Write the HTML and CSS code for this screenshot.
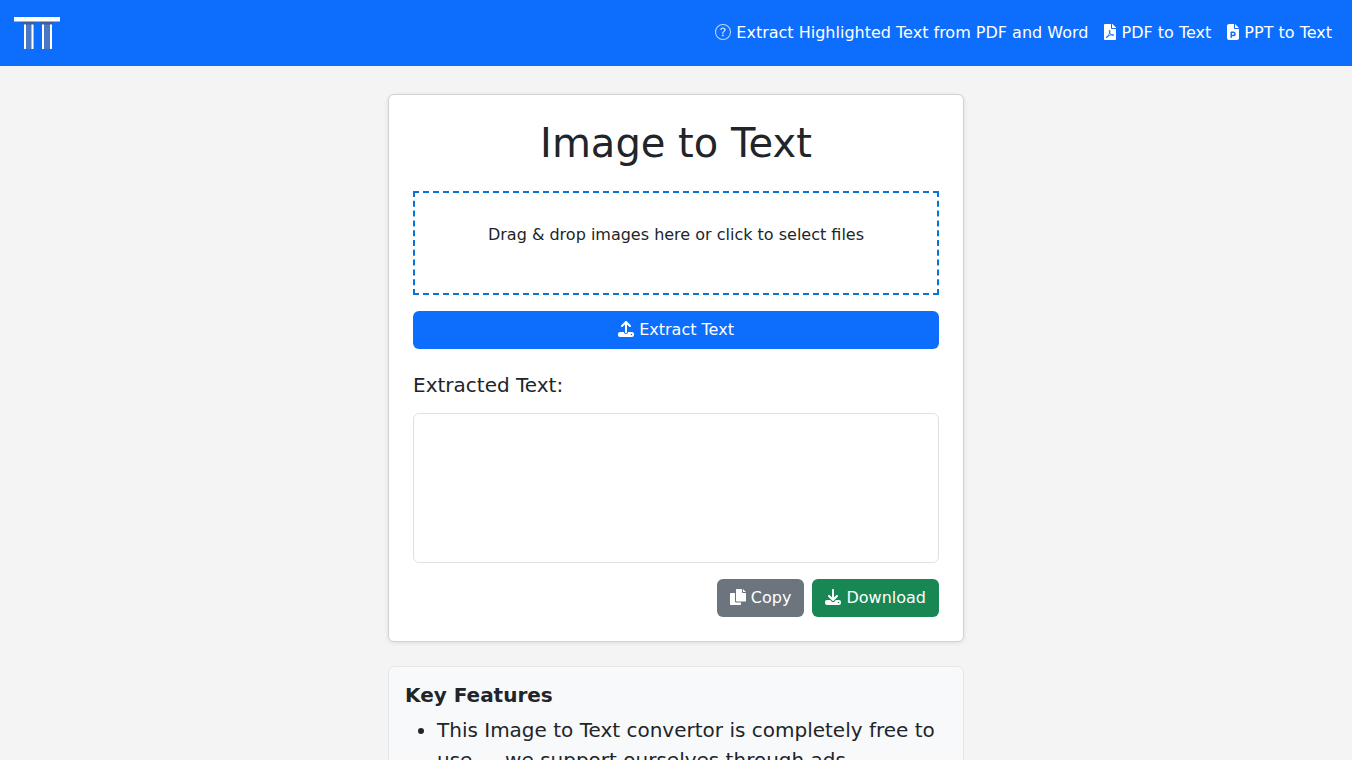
FILE: index.html
```html
<!DOCTYPE html>
<html lang="en">
<head>
<meta charset="utf-8">
<title>Image to Text</title>
<link rel="stylesheet" href="styles.css">
</head>
<body>
<nav class="navbar">
  <a class="brand" href="#" aria-label="Home">
    <svg width="46" height="32" viewBox="0 0 46 32">
      <path class="logo-stem" d="M10 7h9.500v25H10zM28 7h10v25H28z"/>
      <path class="logo-dim" d="M7 4h15v3.500H7zM25.500 4h14v3.500h-14z"/>
      <rect class="logo-white" x="0" y="0" width="46" height="4.500"/>
      <path class="logo-white" d="M10 7.500h2V32h-2zM17.500 7.500h2V32h-2zM28 7.500h2V32h-2zM36 7.500h2V32h-2z"/>
    </svg>
  </a>
  <div class="links">
    <a href="#"><svg class="ic thin" width="16" height="16" viewBox="0 0 16 16"><path d="M8 15A7 7 0 1 1 8 1a7 7 0 0 1 0 14m0 1A8 8 0 1 0 8 0a8 8 0 0 0 0 16"/><path d="M5.255 5.786a.237.237 0 0 0 .241.247h.825c.138 0 .248-.113.266-.25.09-.656.54-1.134 1.342-1.134.686 0 1.314.343 1.314 1.168 0 .635-.374.927-.965 1.371-.673.489-1.206 1.06-1.168 1.987l.003.217a.25.25 0 0 0 .25.246h.811a.25.25 0 0 0 .25-.25v-.105c0-.718.273-.927 1.01-1.486.609-.463 1.244-.977 1.244-2.056 0-1.511-1.276-2.241-2.673-2.241-1.267 0-2.655.59-2.75 2.286m1.557 5.763c0 .533.425.927 1.01.927.609 0 1.028-.394 1.028-.927 0-.552-.42-.94-1.029-.94-.584 0-1.009.388-1.009.94"/></svg> Extract Highlighted Text from PDF and Word</a>
    <a href="#"><svg class="ic" width="12" height="16" viewBox="0 0 384 512"><path d="M181.9 256.1c-5-16-4.9-46.9-2-46.9 8.4 0 7.6 36.9 2 46.9zm-1.7 47.2c-7.7 20.2-17.3 43.3-28.4 62.7 18.3-7 39-17.2 62.9-21.9-12.7-9.6-24.9-23.4-34.5-40.8zM86.1 428.1c0 .8 13.2-5.4 34.9-40.2-6.7 6.3-29.1 24.5-34.9 40.2zM248 160h136v328c0 13.3-10.7 24-24 24H24c-13.3 0-24-10.7-24-24V24C0 10.7 10.7 0 24 0h200v136c0 13.2 10.8 24 24 24zm-8 171.8c-20-12.2-33.3-29-42.7-53.8 4.5-18.5 11.6-46.6 6.2-64.2-4.7-29.4-42.4-26.5-47.8-6.8-5 18.3-.4 44.1 8.1 77-11.6 27.6-28.7 64.6-40.8 85.8-.1 0-.1.1-.2.1-27.1 13.9-73.6 44.5-54.5 68 5.6 6.9 16 10 21.5 10 17.9 0 35.7-18 61.1-61.8 25.8-8.5 54.1-19.1 79-23.2 21.7 11.8 47.1 19.5 64 19.5 29.2 0 31.2-32 19.7-43.4-13.9-13.6-54.3-9.7-73.6-7.2zM377 105L279 7c-4.5-4.5-10.6-7-17-7h-6v128h128v-6.1c0-6.3-2.5-12.4-7-16.9zm-74.1 255.3c4.1-2.7-2.5-11.9-42.8-9 37.1 15.8 42.8 9 42.8 9z"/></svg> PDF to Text</a>
    <a href="#"><svg class="ic" width="12" height="16" viewBox="0 0 384 512"><path d="M64 0C28.7 0 0 28.7 0 64V448c0 35.3 28.7 64 64 64H320c35.3 0 64-28.7 64-64V160H256c-17.7 0-32-14.3-32-32V0H64zM256 0V128H384L256 0zM136 240h68c42 0 76 34 76 76s-34 76-76 76H160v32c0 13.3-10.7 24-24 24s-24-10.7-24-24V368 264c0-13.3 10.7-24 24-24zm68 104c15.5 0 28-12.5 28-28s-12.5-28-28-28H160v56h44z"/></svg> PPT to Text</a>
  </div>
</nav>
<main class="container">
  <section class="card">
    <h1 class="title">Image to Text</h1>
    <div class="drop"><p>Drag &amp; drop images here or click to select files</p></div>
    <button class="btn btn-primary wide"><svg class="ic" width="16" height="16" viewBox="0 0 512 512"><path d="M288 109.3V352c0 17.7-14.3 32-32 32s-32-14.3-32-32V109.3l-73.4 73.4c-12.5 12.5-32.8 12.5-45.3 0s-12.5-32.8 0-45.3l128-128c12.5-12.5 32.8-12.5 45.3 0l128 128c12.5 12.5 12.5 32.8 0 45.3s-32.8 12.5-45.3 0L288 109.3zM64 352H192c0 35.3 28.7 64 64 64s64-28.7 64-64H448c35.3 0 64 28.7 64 64v32c0 35.3-28.7 64-64 64H64c-35.3 0-64-28.7-64-64V416c0-35.3 28.7-64 64-64zM432 456a24 24 0 1 0 0-48 24 24 0 1 0 0 48z"/></svg> Extract Text</button>
    <h2 class="sub">Extracted Text:</h2>
    <textarea class="output"></textarea>
    <div class="actions">
      <button class="btn btn-gray"><svg class="ic" width="16" height="16" viewBox="0 0 16 16"><path d="M7 0h5v3.200c0 .5.3.8.8.8H16v7.500c0 .6-.4 1-1 1H7c-.6 0-1-.4-1-1V1c0-.6.4-1 1-1zM13 0l3 3h-3zM1 4h4v8c0 1 .6 1.600 1.600 1.600H11V15c0 .6-.4 1-1 1H1c-.6 0-1-.4-1-1V5c0-.6.4-1 1-1z"/></svg> Copy</button>
      <button class="btn btn-green"><svg class="ic" width="16" height="16" viewBox="0 0 512 512"><path d="M288 32c0-17.700-14.300-32-32-32s-32 14.300-32 32V274.700l-73.400-73.400c-12.500-12.500-32.800-12.500-45.300 0s-12.500 32.800 0 45.300l128 128c12.500 12.500 32.800 12.500 45.300 0l128-128c12.500-12.500 12.500-32.800 0-45.300s-32.800-12.500-45.300 0L288 274.700V32zM64 352c-35.300 0-64 28.700-64 64v32c0 35.300 28.700 64 64 64H448c35.300 0 64-28.700 64-64V416c0-35.300-28.700-64-64-64H346.500l-45.300 45.300c-25 25-65.500 25-90.500 0L165.500 352H64zm368 56a24 24 0 1 1 0 48 24 24 0 1 1 0-48z"/></svg> Download</button>
    </div>
  </section>
  <section class="features">
    <h3>Key Features</h3>
    <ul>
      <li>This Image to Text convertor is completely free to use — we support ourselves through ads.</li>
    </ul>
  </section>
</main>
</body>
</html>
```
FILE: styles.css
```css
* { box-sizing: border-box; }
html, body { margin: 0; height: 100%; overflow: hidden; }
body { background: #f4f4f4; color: #212529; font-family: "DejaVu Sans", sans-serif; font-size: 16px; line-height: 1.5; }
a { color: #fff; text-decoration: none; }
.ic { vertical-align: -2px; fill: #fff; }
.thin { opacity: .75; }
.logo-white { fill: #fff; }
.logo-dim { fill: #3d5f96; }
.logo-stem { fill: #4a78c2; }
.navbar { height: 66px; background: #0d6efd; display: flex; align-items: center; justify-content: space-between; padding: 0 12px 0 14px; }
.brand { display: flex; }
.links { display: flex; }
.links a { padding: 8px; }
.container { width: 576px; margin: 28px auto 0; }
.card { background: #fff; border: 1px solid #d2d2d2; border-radius: 6px; padding: 24px; box-shadow: 0 1px 4px rgba(0,0,0,.1); height: 548px; }
.title { margin: 0 0 24px; font-size: 40px; font-weight: 400; line-height: 48px; text-align: center; }
.drop { border: 2px dashed #0575d8; height: 104px; padding: 30px 20px; text-align: center; margin-bottom: 16px; }
.drop p { margin: 0; }
.btn { border: 1px solid transparent; border-radius: 6px; color: #fff; font: inherit; padding: 6px 12px; height: 38px; }
.btn-primary { background: #0d6efd; }
.wide { display: block; width: 100%; }
.sub { margin: 24px 0 16px; font-size: 20px; font-weight: 400; line-height: 24px; }
.output { display: block; width: 100%; height: 150px; border: 1px solid #dee2e6; border-radius: 6px; background: #fff; resize: none; }
.actions { display: flex; justify-content: flex-end; gap: 8px; margin-top: 16px; }
.btn-gray { background: #6c757d; }
.btn-green { background: #198754; }
.features { background: #f8f9fa; border: 1px solid #e5e7eb; border-radius: 6px; margin-top: 24px; padding: 16px; }
.features h3 { margin: 0 0 8px; font-size: 20px; font-weight: 700; line-height: 24px; }
.features ul { margin: 0; padding-left: 32px; font-size: 20px; }
```
